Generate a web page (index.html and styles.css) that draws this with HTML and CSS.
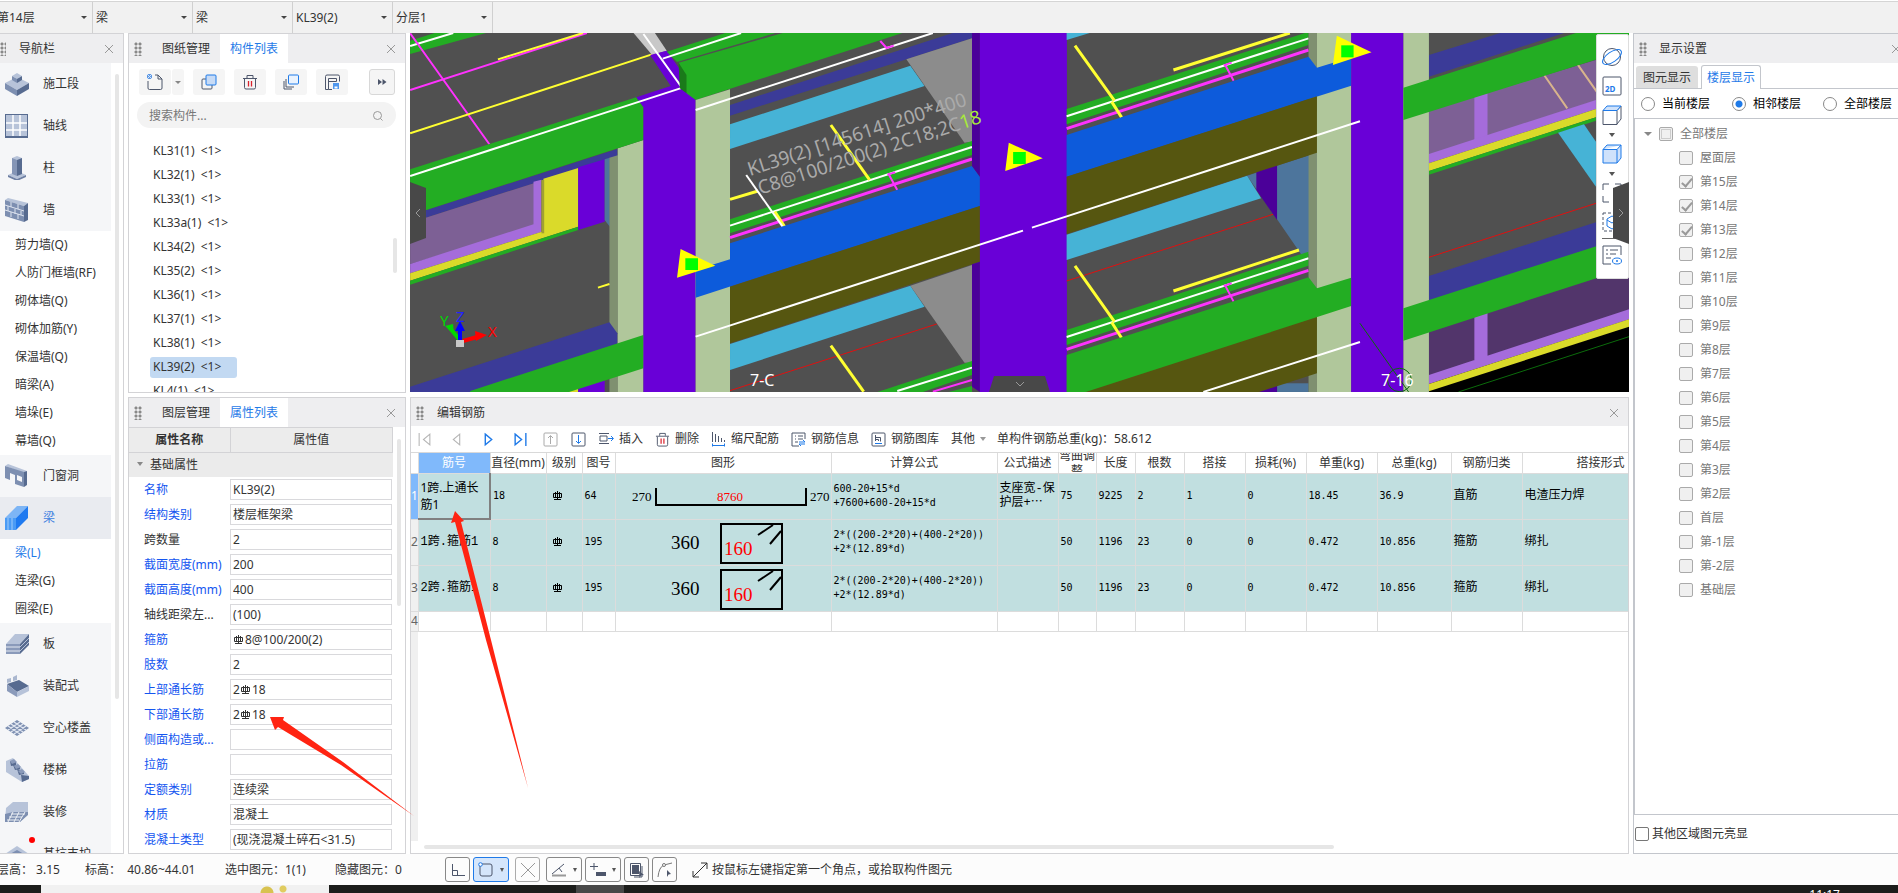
FILE: index.html
```html
<!DOCTYPE html>
<html lang="zh-CN">
<head>
    <meta charset="UTF-8">
    <meta name="viewport" content="width=device-width, initial-scale=1.0">
    <title>编辑钢筋</title>
    <link rel="stylesheet" href="styles.css">
</head>
<body>

<!-- shared icons -->
<svg class="defs" width="0" height="0" aria-hidden="true">
    <symbol id="close" viewBox="0 0 10 10"><path d="M1 1l8 8M9 1l-8 8" fill="none" stroke="#999"/></symbol>
    <symbol id="rebar" viewBox="0 0 12 12"><path d="M1.500 3.500h8v4h-8zM5.500 1v9M3.500 2v6M7.500 2v6M2 9.500h7" fill="none" stroke="currentColor"/></symbol>
    <symbol id="trash" viewBox="0 0 16 16"><path d="M1 4.500h14M5 4V1.500h6V4M2.500 5v8.500q0 1.500 1.500 1.500h8q1.500 0 1.500-1.500V5" fill="none" stroke="#4d566b"/><path d="M6.500 7v5.500M9.500 7v5.500" stroke="#d9232e" stroke-width="1.300"/></symbol>
    <symbol id="cube" viewBox="0 0 20 20"><path d="M1 5.500h14v14H1zM15 5.500L19 1v13l-4 5" stroke="#4d566b" fill="none"/><path d="M1 5.500L5 1h14l-4 4.500z" fill="#cfe2fb" stroke="#1f7ae8"/></symbol>
</svg>

<header class="floor-bar">
    <label class="drop"><select aria-label="楼层"><option>第14层</option></select></label>
    <label class="drop"><select aria-label="构件大类"><option>梁</option></select></label>
    <label class="drop"><select aria-label="构件类型"><option>梁</option></select></label>
    <label class="drop"><select aria-label="构件"><option>KL39(2)</option></select></label>
    <label class="drop"><select aria-label="分层"><option>分层1</option></select></label>
</header>

<main class="workspace">

    <nav class="panel nav">
        <div class="panel-head">
            <i class="grip"></i><span class="title">导航栏</span>
            <button class="close" aria-label="关闭"><svg><use href="#close"/></svg></button>
        </div>
        <div class="nav-body">
            <ul class="nav-list">
                <li><button class="group"><svg viewBox="0 0 24 24"><path d="M0 11l12-6 12 6-12 7z" fill="#b7c3d9"/><path d="M0 11l12 7v6L0 17z" fill="#7d8fb1"/><path d="M24 11l-12 7v6l12-7z" fill="#576b90"/><path d="M7 4l5-3 5 3-5 3z" fill="#b7c3d9"/><path d="M7 4l5 3v4L7 8z" fill="#7d8fb1"/><path d="M17 4l-5 3v4l5-3z" fill="#576b90"/></svg>施工段</button></li>
                <li><button class="group"><svg viewBox="0 0 24 24"><path d="M0 0h23v24H0z" fill="#576b90"/><path d="M1 1h21v21H1z" fill="#b7c3d9"/><path d="M8 1v21M15 1v21M1 9h21M1 16h21" stroke="#fff" stroke-width="1.500"/></svg>轴线</button></li>
                <li><button class="group"><svg viewBox="0 0 24 24"><path d="M3 19l9-4 9 4-9 4z" fill="#b7c3d9"/><path d="M3 19l9 4 9-4v2l-9 4-9-4z" fill="#6d7fa3"/><path d="M7 2h5v18l-5-2z" fill="#8495b6"/><path d="M12 2h5v16l-5 2z" fill="#576b90"/><path d="M7 2l5-2 5 2-5 2z" fill="#b7c3d9"/></svg>柱</button></li>
                <li><button class="group"><svg viewBox="0 0 24 24"><path d="M0 2l3-2 20 5-4 3z" fill="#b7c3d9"/><path d="M0 2l19 6v16L0 18z" fill="#7d8fb1"/><path d="M19 8l4-3v17l-4 2z" fill="#576b90"/><path d="M0 7l19 6M0 12l19 6M6 4v5M13 6v5M3 8v5M10 11v5M16 13v4M6 14v5M13 16v5" stroke="#dfe5f0"/></svg>墙</button></li>
                <li><button class="sub">剪力墙(Q)</button></li>
                <li><button class="sub">人防门框墙(RF)</button></li>
                <li><button class="sub">砌体墙(Q)</button></li>
                <li><button class="sub">砌体加筋(Y)</button></li>
                <li><button class="sub">保温墙(Q)</button></li>
                <li><button class="sub">暗梁(A)</button></li>
                <li><button class="sub">墙垛(E)</button></li>
                <li><button class="sub">幕墙(Q)</button></li>
                <li><button class="group"><svg viewBox="0 0 24 24"><path d="M0 2l3-2 19 7-3 2z" fill="#b7c3d9"/><path d="M0 2l19 6v15l-9-3V11l-5-2v7l-5-2z" fill="#7d8fb1"/><path d="M19 8l3-1v14l-3 2z" fill="#576b90"/><path d="M12 11l5 2v5l-5-2z" fill="#f5f6f8"/></svg>门窗洞</button></li>
                <li><button class="group active"><svg viewBox="0 0 24 24"><path d="M0 12L12 0h11L11 12z" fill="#7db5f5"/><path d="M0 12h11v12H0z" fill="#4a9bf5"/><path d="M3 12v12M7 12v12" stroke="#9fcbf9"/><path d="M11 12L23 0v12L11 24z" fill="#1f7af0"/></svg>梁</button></li>
                <li><button class="sub active">梁(L)</button></li>
                <li><button class="sub">连梁(G)</button></li>
                <li><button class="sub">圈梁(E)</button></li>
                <li><button class="group"><svg viewBox="0 0 24 24"><path d="M1 12L10 2h14l-9 10z" fill="#b7c3d9"/><path d="M1 12h14v10H1z" fill="#8a9aba"/><path d="M1 15h14M1 19h14" stroke="#e4e9f2"/><path d="M15 12l9-10v11l-9 9z" fill="#576b90"/><path d="M15 15l9-9M15 19l9-9" stroke="#b7c3d9"/></svg>板</button></li>
                <li><button class="group"><svg viewBox="0 0 24 24"><path d="M2 10l12-4 10 6-12 6z" fill="#576b90"/><path d="M2 10l10 8v5L2 17z" fill="#8a9aba"/><path d="M24 12v5l-12 6v-5z" fill="#b7c3d9"/><path d="M2 5l4-1v4l-4 1zM8 3l4-2v5l-4 1z" fill="#aab7cf"/></svg>装配式</button></li>
                <li><button class="group"><svg viewBox="0 0 24 24"><path d="M0 12l12-8 12 8-12 8z" fill="#7d8fb1"/><path d="M3 14l12-8M6 16l12-8M9 18l12-8M21 14L9 6M18 16L6 8M15 18L3 10" stroke="#e1e7f1" stroke-width="1.500"/></svg>空心楼盖</button></li>
                <li><button class="group"><svg viewBox="0 0 24 24"><path d="M1 3l7-3 16 18v3l-7 3L1 14z" fill="#b7c3d9"/><path d="M5 3l6 1v3l-5 1zM8 7l7 1v3l-5 1zM12 11l7 2v3l-5 1zM16 17l8 1v3l-7 3z" fill="#576b90"/><path d="M5 3l4-2 3 3-5 2zM9 8l4-2 3 3-5 2zM13 13l4-2 3 3-4 2z" fill="#8a9aba"/></svg>楼梯</button></li>
                <li><button class="group"><svg viewBox="0 0 24 24"><path d="M1 8l7-6h15v12l-8 8H0z" fill="#b7c3d9"/><path d="M0 14l8-2h15v3l-8 7H0z" fill="#7d8fb1"/><path d="M6 14h14M4 17h13M2 20h12M8 12l-5 10M14 12L9 22M20 12l-6 10" stroke="#eef1f6"/></svg>装修</button></li>
                <li><button class="group dot"><svg viewBox="0 0 24 24"><path d="M0 12L12 4l12 8-12 8z" fill="#b7c3d9"/><path d="M5 12l7-4 7 4-7 4z" fill="#7d8fb1"/></svg>基坑支护</button></li>
            </ul>
            <i class="vbar nav-bar"></i>
        </div>
    </nav>

    <div class="side">
        <section class="panel parts">
            <div class="panel-head">
                <i class="grip"></i>
                <button class="tab">图纸管理</button><button class="tab active">构件列表</button>
                <button class="close" aria-label="关闭"><svg><use href="#close"/></svg></button>
            </div>
            <div class="parts-tools">
                <div class="split">
                    <button class="tool" aria-label="新建"><svg viewBox="0 0 16 16"><path d="M1 7v7q0 1.500 1.500 1.500h11q1.500 0 1.500-1.500V5l-4-4H8M11 1v4h4" fill="none" stroke="#4d566b"/><path d="M0 0h5v5H0z" fill="#5d98e4"/><path d="M0 0l5 5M5 0L0 5" stroke="#d8e7fa"/></svg></button>
                    <button class="tool arrow" aria-label="新建选项"></button>
                </div>
                <button class="tool" aria-label="复制"><svg viewBox="0 0 16 16"><rect x="1" y="5" width="10" height="10" rx="1" fill="none" stroke="#4d566b"/><rect x="5" y="1" width="10" height="10" rx="1" fill="#c7dbf6" stroke="#1f7ae8"/></svg></button>
                <button class="tool" aria-label="删除"><svg><use href="#trash"/></svg></button>
                <button class="tool" aria-label="层间复制"><svg viewBox="0 0 16 16"><path d="M1 7v8h8M3 5v8h8" fill="none" stroke="#4d566b"/><rect x="5.500" y="1" width="10" height="9" rx="1" fill="#eaf3fe" stroke="#1f7ae8"/></svg></button>
                <button class="tool" aria-label="存档"><svg viewBox="0 0 16 16"><path d="M8 15.500H4.500V4.500M1.500 15.500h3M1.500 15.500v-13q0-1.500 1.500-1.500h11q1.500 0 1.500 1.500v5M4.500 4.500h8M12.500 4.500v3M4.500 7.500h8" fill="none" stroke="#4d566b"/><path d="M9 9h6v6H9z" fill="#4f97ee"/><path d="M10.500 12.500h3v2h-3z" fill="#fff"/></svg></button>
                <button class="tool more" aria-label="更多"><svg viewBox="0 0 16 16"><path d="M4 5l4 3-4 3zM8.500 5l4 3-4 3z" fill="#4d566b"/></svg></button>
            </div>
            <label class="search">
                <input type="text" placeholder="搜索构件..." aria-label="搜索构件">
                <svg viewBox="0 0 12 12"><circle cx="5.500" cy="5.500" r="4" fill="none" stroke="#999"/><path d="M8.500 8.500l2 2" stroke="#999"/></svg>
            </label>
            <div class="parts-body">
                <ul class="parts-list">
                    <li><span>KL31(1) &nbsp;&lt;1&gt;</span></li>
                    <li><span>KL32(1) &nbsp;&lt;1&gt;</span></li>
                    <li><span>KL33(1) &nbsp;&lt;1&gt;</span></li>
                    <li><span>KL33a(1) &nbsp;&lt;1&gt;</span></li>
                    <li><span>KL34(2) &nbsp;&lt;1&gt;</span></li>
                    <li><span>KL35(2) &nbsp;&lt;1&gt;</span></li>
                    <li><span>KL36(1) &nbsp;&lt;1&gt;</span></li>
                    <li><span>KL37(1) &nbsp;&lt;1&gt;</span></li>
                    <li><span>KL38(1) &nbsp;&lt;1&gt;</span></li>
                    <li><span class="selected">KL39(2) &nbsp;&lt;1&gt;</span></li>
                    <li><span>KL4(1) &nbsp;&lt;1&gt;</span></li>
                </ul>
                <i class="vbar parts-bar"></i>
            </div>
        </section>

        <section class="panel props">
            <div class="panel-head">
                <i class="grip"></i>
                <button class="tab">图层管理</button><button class="tab active">属性列表</button>
                <button class="close" aria-label="关闭"><svg><use href="#close"/></svg></button>
            </div>
            <div class="props-body">
                <table class="props-table">
                    <thead>
                        <tr><th class="name">属性名称</th><th>属性值</th></tr>
                        <tr class="section"><td colspan="2"><i class="tri"></i>基础属性</td></tr>
                    </thead>
                    <tbody>
                        <tr><td><label for="p1">名称</label></td><td><div class="field"><input id="p1" value="KL39(2)"></div></td></tr>
                        <tr><td><label for="p2">结构类别</label></td><td><div class="field"><input id="p2" value="楼层框架梁"></div></td></tr>
                        <tr><td><label for="p3" class="fixed">跨数量</label></td><td><div class="field"><input id="p3" value="2"></div></td></tr>
                        <tr><td><label for="p4">截面宽度(mm)</label></td><td><div class="field"><input id="p4" value="200"></div></td></tr>
                        <tr><td><label for="p5">截面高度(mm)</label></td><td><div class="field"><input id="p5" value="400"></div></td></tr>
                        <tr><td><label for="p6" class="fixed">轴线距梁左...</label></td><td><div class="field"><input id="p6" value="(100)"></div></td></tr>
                        <tr><td><label for="p7">箍筋</label></td><td><div class="field"><svg class="rebar"><use href="#rebar"/></svg><input id="p7" value="8@100/200(2)"></div></td></tr>
                        <tr><td><label for="p8">肢数</label></td><td><div class="field"><input id="p8" value="2"></div></td></tr>
                        <tr><td><label for="p9">上部通长筋</label></td><td><div class="field">2<svg class="rebar"><use href="#rebar"/></svg><input id="p9" value="18"></div></td></tr>
                        <tr><td><label for="p10">下部通长筋</label></td><td><div class="field">2<svg class="rebar"><use href="#rebar"/></svg><input id="p10" value="18"></div></td></tr>
                        <tr><td><label for="p11">侧面构造或...</label></td><td><div class="field"><input id="p11" value=""></div></td></tr>
                        <tr><td><label for="p12">拉筋</label></td><td><div class="field"><input id="p12" value=""></div></td></tr>
                        <tr><td><label for="p13">定额类别</label></td><td><div class="field"><input id="p13" value="连续梁"></div></td></tr>
                        <tr><td><label for="p14">材质</label></td><td><div class="field"><input id="p14" value="混凝土"></div></td></tr>
                        <tr><td><label for="p15">混凝土类型</label></td><td><div class="field"><input id="p15" value="(现浇混凝土碎石&lt;31.5)"></div></td></tr>
                    </tbody>
                </table>
                <i class="vbar props-bar"></i>
            </div>
        </section>
    </div>

    <div class="center">
        <section class="view">
            <svg class="scene" viewBox="0 0 1219 359" preserveAspectRatio="xMinYMin slice">
                <rect width="1219" height="359" fill="#505050"/>

                <!-- left bays -->
                <g class="bay" transform="translate(-5 -3) scale(.3954 .3333)">
                    <path class="green" d="M13 32L75 9H205L13 72z"/>
                    <path class="w" d="M13 48L122 9"/>
                    <path class="m" d="M13 10L222 357M13 180L460 9"/>
                    <path class="y" d="M235 88L450 9M13 310L640 67"/>
                    <path d="M578 9h54l30 53-37 13z" fill="#c8c8c8"/>
                    <path class="navy" d="M13 556L537 357V380L13 578z"/>
                    <path class="mauve" d="M13 578L330 458V590L13 702z"/>
                    <path class="lav" d="M13 702L325 583V455L345 449V606L13 730z"/>
                    <path class="yel" d="M13 730L350 604V446L438 414V590L13 752z"/>
                    <path d="M345 450h7V610h-7z" fill="#a0a030"/>
                    <path class="green" d="M13 752L438 590V600L13 764z"/>
                    <path class="purple" d="M438 412L505 388V575L438 600z"/>
                    <path class="steel" d="M505 388L518 383V590L505 570z"/>
                    <path class="stone-dark" d="M517 383L538 376V1086H517z"/>
                    <path class="stone" d="M538 355L603 330V1086H538z"/>
                    <path class="navy" d="M13 1070L517 877 537 910V945L170 1086H13z"/>
                    <path class="y" d="M488 773L517 762"/>
                    <path class="yel" d="M400 1086L438 1070V1086z"/>
                    <path class="purple" d="M438 1070L505 1050V1086H438z"/>
                    <path class="green" d="M165 1083L603 915V1015L415 1086H165z"/>
                    <path class="green" d="M13 418L585 202 603 232V330L13 556z"/>
                    <path class="purple" d="M585 202L672 168 620 75 662 62 735 185V1086H603V232z"/>
                    <path class="w" d="M13 438L702 173M603 12L700 172"/>

                    <path class="green" d="M662 65L810 9H937L688 96zM692 98L955 9H1258L735 210 712 190z"/>
                    <path d="M692 98l20 37v55l-17-15z" fill="#1a7a1a"/>
                    <path class="w" d="M652 86L850 9"/>
                    <path class="stone" d="M735 210L822 178V1086H735z"/>
                    <path class="navy" d="M822 225L1385 9H1454V17L822 257z"/>
                    <path class="w thick" d="M735 240L1335 9"/>
                    <path class="m" d="M1202 33L1218 54 1236 47"/>
                    <path class="sky" d="M822 283L1278 107 1314 168 822 357z"/>
                    <path class="slab" d="M1268 88L1434 25V335L1415 338z"/>
                    <path class="green" d="M822 568L1434 333V375L822 610z"/>
                    <path class="w" d="M822 587L1434 351"/>
                    <path class="m thick" d="M822 623L1434 387"/>
                    <path class="y thick" d="M1077 285L1175 450M935 545L960 590M822 508L893 483"/>
                    <path class="m" d="M1222 430L1245 480M1220 434L1240 427"/>
                    <path class="w thick" d="M863 435L955 590"/>
                    <path class="blue" d="M735 720L822 688V640L1434 408 1454 440V528L735 803z"/>
                    <path class="olive" d="M822 770L1454 528V695L822 940z"/>
                    <path class="sky" d="M822 942L1278 767 1314 830 822 1020z"/>
                    <path class="slab" d="M1278 767L1434 705V998H1415z"/>
                    <path class="r" d="M822 1082L1345 882"/>
                    <path class="y thick" d="M1077 947L1160 1085"/>
                    <path class="green" d="M1195 1086L1434 993V1035L1310 1086zM1375 1086L1434 1068V1086z"/>
                    <path class="w" d="M1245 1083L1434 1013"/>
                    <path class="m" d="M1335 1085L1434 1050"/>
                    <path class="violet" d="M1434 9H1454V440L1434 408zM1434 703L1454 695V1086L1434 1070z"/>
                    <path class="purple" d="M1454 9H1674V1086H1454z"/>
                    <path class="w" d="M735 920L1563 602"/>
                    <path class="mark" d="M697 657L785 707 688 743zM1527 338L1613 385 1518 423z"/>
                    <path class="knob" d="M709 685h32v35h-32zM1538 366h32v36h-32z"/>
                </g>

                <!-- right bays -->
                <g class="bay" transform="translate(600 -3) scale(.3986 .3333)">
                    <path class="sky" d="M142 9H200L142 30z"/>
                    <path class="green" d="M142 237L740 9H749V45L142 283z"/>
                    <path class="w" d="M142 259L749 25"/>
                    <path class="m thick" d="M142 296L749 60"/>
                    <path class="m" d="M540 105L561 152M536 106L556 98"/>
                    <path class="y thick" d="M163 47L262 212M255 215L280 262M410 120L702 9"/>
                    <path class="steel" d="M595 437L770 368V672H730z"/>
                    <path class="violet" d="M618 425L670 405V570L618 480z"/>
                    <path class="sky" d="M142 614L595 437 630 505 142 690z"/>
                    <path class="r" d="M142 753L660 553"/>
                    <path class="green" d="M142 900L749 665V707L142 945z"/>
                    <path class="w" d="M142 921L749 685"/>
                    <path class="m thick" d="M142 958L749 721"/>
                    <path class="m" d="M540 767L561 815M536 768L556 760"/>
                    <path class="y thick" d="M163 708L262 875M255 877L280 924M410 783L725 660"/>
                    <path class="steel" d="M670 1060H749V1086H670z"/>
                    <path class="violet" d="M620 1086L670 1060V1086z"/>
                    <path class="stone-dark" d="M749 9H770V1086H749z"/>
                    <path class="stone" d="M770 9H856V1086H770z"/>
                    <path class="blue" d="M142 315L749 80 770 113 856 82V167L142 440z"/>
                    <path class="olive" d="M142 440L770 199V368L142 612z"/>
                    <path class="olive" d="M185 1086L770 855V1030L625 1086z"/>
                    <path class="green" d="M142 975L749 742 770 775 856 743V828L190 1086H142z"/>
                    <path class="purple" d="M856 9H987V1086H856z"/>
                    <path class="w" d="M55 593L878 274M485 1086L878 936"/>

                    <path d="M1051 1060L1553 870V1086H1051z"/>
                    <path class="navy" d="M1051 75L1230 9H1390L1051 140z"/>
                    <path class="mauve" d="M1051 240L1553 60V180L1051 375z"/>
                    <path class="lav" d="M1165 200L1198 190V330L1165 342z"/>
                    <path d="M1340 135L1398 235M1424 103L1475 190" stroke="#d8b48c" stroke-width="2"/>
                    <path class="lav" d="M1051 372L1470 210V237L1051 400z"/>
                    <path class="yel" d="M1051 400L1470 237V262L1051 423z"/>
                    <path class="green" d="M1051 423L1470 262V272L1051 434z"/>
                    <path class="sky" d="M1375 308L1440 283 1470 335V470z"/>
                    <path class="r" d="M1051 682L1470 520"/>
                    <path class="navy" d="M1051 738L1470 577V660L1051 820z"/>
                    <path d="M1051 900L1553 710V845L1051 1040z" fill="#52356b"/>
                    <path class="lav" d="M1165 855L1198 845V990L1165 1000zM1051 1035L1553 838V868L1051 1062z"/>
                    <path class="yel" d="M1051 1062L1553 868V890L1051 1084z"/>
                    <path class="stone" d="M987 9H1051V1086H987z"/>
                    <path class="green" d="M987 173L1420 9H1553V58L987 270zM987 835L1553 617V713L987 932z"/>
                    <path d="M1125 1086L1553 920M878 880L1000 1086" fill="none" stroke="#0b6b0b"/>
                    <ellipse cx="977" cy="1050" rx="30" ry="35" fill="none" stroke="#0b6b0b"/>
                    <path class="mark" d="M820 17L907 67 810 105z"/>
                    <path class="knob" d="M831 46h31v36h-31z"/>
                </g>

                <g class="note" transform="translate(340 143) rotate(-18)">
                    <text>KL39(2) [145614] 200*400</text>
                    <text x="4" y="21">C8@100/200(2) 2C18;2C<tspan fill="#a8e83c">18</tspan></text>
                </g>
                <text class="axis-no" x="971" y="353">7-16</text>
                <text class="axis-no" x="340" y="353">7-C</text>

                <!-- axis gizmo -->
                <path d="M49 306l-10-12" stroke="#00d800" stroke-width="4"/>
                <path d="M35 293l8-2 1 10z" fill="#00d800"/>
                <path d="M50 307V296" stroke="#0000ff" stroke-width="4"/>
                <path d="M45 298l5-10 5 10z" fill="#0000ff"/>
                <path d="M53 308l14-4" stroke="#f00" stroke-width="4"/>
                <path d="M65 298l12 4-11 6z" fill="#f00"/>
                <path d="M46 307h8v7h-8z" fill="#c8c8c8"/>
                <text class="axis" x="30" y="293" fill="#00d800">Y</text>
                <text class="axis" x="46" y="289" fill="#2020ff">Z</text>
                <text class="axis" x="78" y="304" fill="#f00">X</text>
            </svg>
            <button class="fold fold-left" aria-label="折叠左侧"><svg viewBox="0 0 8 10"><path d="M6 1L2 5l4 4" fill="none" stroke="#999"/></svg></button>
            <button class="fold fold-down" aria-label="折叠下方"><svg viewBox="0 0 10 8"><path d="M1 2l4 4 4-4" fill="none" stroke="#999"/></svg></button>
            <div class="view-tools">
                <button aria-label="动态观察"><svg viewBox="0 0 20 20"><circle cx="10" cy="10" r="8.500" fill="none" stroke="#4d566b"/><ellipse cx="10" cy="10" rx="11" ry="5" transform="rotate(-35 10 10)" fill="none" stroke="#1f7ae8"/></svg></button>
                <button aria-label="二维"><svg viewBox="0 0 20 20"><rect x="1" y="1" width="18" height="18" rx="1" fill="none" stroke="#4d566b"/><text x="3" y="16" class="two-d">2D</text></svg></button>
                <button aria-label="俯视"><svg><use href="#cube"/></svg></button>
                <i class="tri"></i>
                <button aria-label="三维"><svg viewBox="0 0 20 20"><path d="M1 5.500L5 1h14v13l-4 5H1zM1 5.500h14L19 1M15 5.500V19" fill="#cfe2fb" stroke="#1f7ae8"/></svg></button>
                <i class="tri"></i>
                <button aria-label="全屏"><svg viewBox="0 0 20 20"><path d="M1 7V1h6M13 1h6v6M1 13v6h6M13 19h6v-6" fill="none" stroke="#4d566b"/></svg></button>
                <button aria-label="局部三维"><svg viewBox="0 0 20 20"><path d="M1 1h18v18H1z" fill="none" stroke="#4d566b" stroke-dasharray="3 2"/><path d="M10 4l6 3v7l-6 3-5-3V7zM5 8l5 3 6-4" fill="none" stroke="#1f7ae8"/></svg></button>
                <hr>
                <button aria-label="显示设置"><svg viewBox="0 0 20 20"><path d="M9 19H1V1h18v9M4 5h2M8 5h8M4 9h2M8 9h6M4 13h5" fill="none" stroke="#4d566b"/><ellipse cx="15" cy="16" rx="4.500" ry="3" fill="none" stroke="#1f7ae8"/><circle cx="15" cy="16" r="1" fill="#1f7ae8"/></svg></button>
            </div>
            <button class="fold fold-right" aria-label="折叠右侧"><svg viewBox="0 0 8 10"><path d="M2 1l4 4-4 4" fill="none" stroke="#999"/></svg></button>
        </section>

        <section class="panel edit">
            <div class="panel-head">
                <i class="grip"></i><span class="title">编辑钢筋</span>
                <button class="close" aria-label="关闭"><svg><use href="#close"/></svg></button>
            </div>
            <div class="edit-tools">
                <button class="step" aria-label="首行"><svg viewBox="0 0 14 14"><path d="M2 1v12M12 2L6 7l6 5z" fill="none" stroke="#b5b5b5"/></svg></button>
                <button class="step" aria-label="上一行"><svg viewBox="0 0 14 14"><path d="M10 2L4 7l6 5z" fill="none" stroke="#b5b5b5"/></svg></button>
                <button class="step" aria-label="下一行"><svg viewBox="0 0 14 14"><path d="M4 2l6 5-6 5z" fill="none" stroke="#1f7ae8" stroke-width="1.300"/></svg></button>
                <button class="step" aria-label="末行"><svg viewBox="0 0 14 14"><path d="M12 1v12M2 2l6 5-6 5z" fill="none" stroke="#1f7ae8" stroke-width="1.300"/></svg></button>
                <button class="move" aria-label="上移"><svg viewBox="0 0 15 15"><rect x="1" y="1" width="13" height="13" rx="1" fill="none" stroke="#aaa"/><path d="M7.500 12V4M5 6l2.500-2.500L10 6" fill="none" stroke="#aaa"/></svg></button>
                <button class="move" aria-label="下移"><svg viewBox="0 0 15 15"><rect x="1" y="1" width="13" height="13" rx="1" fill="none" stroke="#4d566b"/><path d="M7.500 3v8M5 9l2.500 2.500L10 9" fill="none" stroke="#1f7ae8"/></svg></button>
                <button class="cmd"><svg viewBox="0 0 15 15"><path d="M0 1.500h10M0 11.500h10M1 4h7v5H1z" fill="none" stroke="#4d566b"/><path d="M9 6.500h5M12 4l2.500 2.500L12 9" fill="none" stroke="#1f7ae8"/></svg>插入</button>
                <button class="cmd"><svg><use href="#trash"/></svg>删除</button>
                <button class="cmd"><svg viewBox="0 0 15 15"><path d="M1.500 0v10M4.500 2v8M7.500 4v6M10.500 6v4M13.500 8v2" stroke="#4d566b"/><path d="M1 13.500h13M1.500 11.500v3M13.500 11.500v3" stroke="#1f7ae8"/></svg>缩尺配筋</button>
                <button class="cmd"><svg viewBox="0 0 15 15"><path d="M8 14H1V1h13v6M4 4h1M7 4h5M4 7h1M7 7h5M4 10h3" fill="none" stroke="#4d566b"/><path d="M8 10h6l-2-2M14 12H8l2 2" fill="none" stroke="#1f7ae8"/></svg>钢筋信息</button>
                <button class="cmd"><svg viewBox="0 0 15 15"><rect x="1" y="1" width="13" height="13" rx="1" fill="none" stroke="#4d566b"/><path d="M4.500 3v6M4.500 5.500h5v4M7.500 9V7.500h-3" fill="none" stroke="#4d566b"/><path d="M4 11.500h7" stroke="#1f7ae8"/></svg>钢筋图库</button>
                <button class="cmd other">其他<i class="tri"></i></button>
                <span class="total">单构件钢筋总重(kg)：58.612</span>
            </div>
            <div class="sheet-wrap">
                <table class="sheet">
                    <colgroup>
                        <col class="c0"><col class="c1"><col class="c2"><col class="c3"><col class="c4"><col class="c5"><col class="c6"><col class="c7"><col class="c8"><col class="c9"><col class="c10"><col class="c11"><col class="c11"><col class="c13"><col class="c14"><col class="c13"><col class="c16">
                    </colgroup>
                    <thead>
                        <tr><th></th><th class="on">筋号</th><th>直径(mm)</th><th>级别</th><th>图号</th><th>图形</th><th>计算公式</th><th>公式描述</th><th><div class="two">弯曲调整</div></th><th>长度</th><th>根数</th><th>搭接</th><th>损耗(%)</th><th>单重(kg)</th><th>总重(kg)</th><th>钢筋归类</th><th>搭接形式</th></tr>
                    </thead>
                    <tbody>
                        <tr class="row">
                            <th class="on">1</th><td class="current">1跨.上通长筋1</td><td>18</td><td class="grade"><svg class="rebar"><use href="#rebar"/></svg></td><td>64</td>
                            <td class="shape"><svg viewBox="0 0 216 45"><path d="M40 14V31H190V14" fill="none" stroke="#000" stroke-width="2"/><text x="16" y="27">270</text><text x="101" y="27" fill="#f00">8760</text><text x="194" y="27">270</text></svg></td>
                            <td>600-20+15*d<br>+7600+600-20+15*d</td><td class="cn">支座宽-保护层+⋯</td><td>75</td><td>9225</td><td>2</td><td>1</td><td>0</td><td>18.45</td><td>36.9</td><td class="cn">直筋</td><td class="cn">电渣压力焊</td>
                        </tr>
                        <tr class="row">
                            <th>2</th><td class="cn">1跨.箍筋1</td><td>8</td><td class="grade"><svg class="rebar"><use href="#rebar"/></svg></td><td>195</td>
                            <td class="shape"><svg viewBox="0 0 216 45"><rect x="105" y="4" width="61" height="39" fill="none" stroke="#000" stroke-width="2"/><path d="M142 15l15-10M154 24l11-13" stroke="#000" stroke-width="2"/><text class="big" x="55" y="29">360</text><text class="big" x="108" y="35" fill="#f00">160</text></svg></td>
                            <td>2*((200-2*20)+(400-2*20))<br>+2*(12.89*d)</td><td></td><td>50</td><td>1196</td><td>23</td><td>0</td><td>0</td><td>0.472</td><td>10.856</td><td class="cn">箍筋</td><td class="cn">绑扎</td>
                        </tr>
                        <tr class="row">
                            <th>3</th><td class="cn">2跨.箍筋1</td><td>8</td><td class="grade"><svg class="rebar"><use href="#rebar"/></svg></td><td>195</td>
                            <td class="shape"><svg viewBox="0 0 216 45"><rect x="105" y="4" width="61" height="39" fill="none" stroke="#000" stroke-width="2"/><path d="M142 15l15-10M154 24l11-13" stroke="#000" stroke-width="2"/><text class="big" x="55" y="29">360</text><text class="big" x="108" y="35" fill="#f00">160</text></svg></td>
                            <td>2*((200-2*20)+(400-2*20))<br>+2*(12.89*d)</td><td></td><td>50</td><td>1196</td><td>23</td><td>0</td><td>0</td><td>0.472</td><td>10.856</td><td class="cn">箍筋</td><td class="cn">绑扎</td>
                        </tr>
                        <tr class="empty"><th>4</th><td></td><td></td><td></td><td></td><td></td><td></td><td></td><td></td><td></td><td></td><td></td><td></td><td></td><td></td><td></td><td></td></tr>
                    </tbody>
                </table>
            </div>
            <i class="hbar"></i>
        </section>
    </div>

    <aside class="panel display">
        <div class="panel-head">
            <i class="grip"></i><span class="title">显示设置</span>
            <button class="close" aria-label="关闭"><svg><use href="#close"/></svg></button>
        </div>
        <div class="sheet-tabs"><button>图元显示</button><button class="active">楼层显示</button></div>
        <div class="scope">
            <label><input type="radio" name="scope">当前楼层</label>
            <label><input type="radio" name="scope" checked>相邻楼层</label>
            <label><input type="radio" name="scope">全部楼层</label>
        </div>
        <div class="floors">
            <label class="root"><i class="tri"></i><input type="checkbox" class="partial" disabled>全部楼层</label>
            <label><input type="checkbox" disabled>屋面层</label>
            <label><input type="checkbox" disabled checked>第15层</label>
            <label><input type="checkbox" disabled checked>第14层</label>
            <label><input type="checkbox" disabled checked>第13层</label>
            <label><input type="checkbox" disabled>第12层</label>
            <label><input type="checkbox" disabled>第11层</label>
            <label><input type="checkbox" disabled>第10层</label>
            <label><input type="checkbox" disabled>第9层</label>
            <label><input type="checkbox" disabled>第8层</label>
            <label><input type="checkbox" disabled>第7层</label>
            <label><input type="checkbox" disabled>第6层</label>
            <label><input type="checkbox" disabled>第5层</label>
            <label><input type="checkbox" disabled>第4层</label>
            <label><input type="checkbox" disabled>第3层</label>
            <label><input type="checkbox" disabled>第2层</label>
            <label><input type="checkbox" disabled>首层</label>
            <label><input type="checkbox" disabled>第-1层</label>
            <label><input type="checkbox" disabled>第-2层</label>
            <label><input type="checkbox" disabled>基础层</label>
        </div>
        <label class="glow"><input type="checkbox">其他区域图元亮显</label>
    </aside>
</main>

<footer class="status">
    <div class="facts">
        <span class="f1">层高： 3.15</span><span class="f2">标高： &nbsp;40.86~44.01</span><span class="f3">选中图元：1(1)</span><span>隐藏图元：0</span>
    </div>
    <div class="snaps">
        <button aria-label="正交"><svg viewBox="0 0 16 16"><path d="M2.500 2v11.500H15M2.500 8.500h5v5" fill="none" stroke="#4d566b"/></svg></button>
        <button class="wide active" aria-label="矩形"><svg viewBox="0 0 16 16"><rect x="2" y="2" width="12" height="12" rx="2" fill="none" stroke="#4d566b"/><circle cx="2.500" cy="2.500" r="1.800" fill="#fff" stroke="#1f7ae8"/></svg><i class="tri"></i></button>
        <button class="off" aria-label="交点"><svg viewBox="0 0 16 16"><path d="M1 1l14 14M15 1L1 15" fill="none" stroke="#999"/></svg></button>
        <button class="wide" aria-label="角度"><svg viewBox="0 0 16 16"><path d="M1 12L13 2M8 6l3 4" fill="none" stroke="#4d566b"/><path d="M1 13.500h14" stroke="#999" stroke-width="2"/></svg><i class="tri"></i></button>
        <button class="wide" aria-label="偏移"><svg viewBox="0 0 16 16"><path d="M4 1v7M0 4.500h8" stroke="#4d566b"/><path d="M6 10h10v4H6z" fill="#4d566b"/></svg><i class="tri"></i></button>
        <button aria-label="选择"><svg viewBox="0 0 16 16"><path d="M3 3h7v9H3z" fill="#4d566b"/><path d="M1.500 1.500h10v12h-10zM13 4v11H5" fill="none" stroke="#4d566b"/><path d="M10 9l5 4-3 .5-1.500 2.500z" fill="#4d566b"/></svg></button>
        <button aria-label="折线"><svg viewBox="0 0 16 16"><path d="M1 15q1-10 6-12l8-2" fill="none" stroke="#777"/><circle cx="7" cy="3" r="1.500" fill="#fff" stroke="#777"/><path d="M10 8l4 4-2.500.5L10 15z" fill="#4d566b"/></svg></button>
    </div>
    <div class="hint"><svg viewBox="0 0 16 16"><path d="M1 15L15 1M9 1h6v6M1 9v6h6" fill="none" stroke="#333"/></svg>按鼠标左键指定第一个角点，或拾取构件图元</div>
</footer>

<div class="taskbar"><i class="window"></i><i class="item"></i><span class="clock">11:17</span></div>

<!-- annotation arrows -->
<svg class="marks" width="600" height="893" viewBox="0 0 600 893">
    <path d="M455 511l9 10-3 1 30 118 37 148-42-148-31-118-4 1z" fill="#ff2412"/>
    <path d="M270 717l14 0-1 3 60 42 71 54-73-51-63-38-3 3z" fill="#ff2412"/>
</svg>

</body>
</html>
```

FILE: styles.css
```css
* {
    margin: 0;
    padding: 0;
    box-sizing: border-box;
}
body {
    display: flex;
    flex-direction: column;
    height: 100vh;
    overflow: hidden;
    position: relative;
    background: #fff;
    color: #333;
    font: 12px/16px "Noto Sans", "Noto Sans CJK SC", sans-serif;
}
button, input, select {
    font: inherit;
    color: inherit;
    border: 0;
    background: none;
    outline: 0;
}
ul {
    list-style: none;
}
svg {
    display: block;
    flex: none;
}
.defs, .marks {
    position: absolute;
}
.marks {
    left: 0;
    top: 0;
    pointer-events: none;
}
.tri {
    border: 3px solid transparent;
    border-top: 4px solid #555;
    border-bottom: 0;
}

/* top selectors */
.floor-bar {
    display: flex;
    flex: none;
    height: 32px;
    margin-top: 1px;
    border-top: 1px solid #d5d5d5;
    background: #f1f1f1;
}
.drop {
    position: relative;
    width: 100px;
    padding-left: 3px;
    border-right: 1px solid #d0d0d0;
}
.drop:first-child {
    width: 93px;
    padding: 0;
}
.drop:first-child select {
    text-indent: -3px;
}
.drop select {
    width: 100%;
    height: 31px;
    appearance: none;
}
.drop::after {
    content: "";
    position: absolute;
    right: 5px;
    top: 14px;
    border: 3px solid transparent;
    border-top: 3px solid #444;
    border-bottom: 0;
}

/* panels */
.workspace {
    display: flex;
    flex: 1;
    min-height: 0;
}
.panel {
    display: flex;
    flex-direction: column;
    border: 1px solid #d3d3d6;
    background: #fff;
    overflow: hidden;
}
.panel-head {
    display: flex;
    align-items: center;
    flex: none;
    height: 29px;
    padding: 1px 9px 0 5px;
    background: #eeeef0;
}
.grip {
    width: 8px;
    height: 14px;
    margin-right: 19px;
    background: radial-gradient(circle, #888 1px, transparent 2px) 0 0 / 4px 4px;
}
.close {
    margin-left: auto;
}
.close svg {
    width: 10px;
    height: 10px;
}
.vbar, .hbar {
    border-radius: 2px;
    background: #e6e6e6;
}
.vbar {
    width: 4px;
}

/* navigation */
.nav {
    width: 124px;
    border-left: 0;
    margin-right: 4px;
}
.nav .panel-head {
    padding-left: 0;
}
.nav .grip {
    width: 6px;
    margin-right: 13px;
}
.nav-body {
    display: flex;
    flex: 1;
    min-height: 0;
    overflow: hidden;
}
.nav-list {
    width: 111px;
}
.nav-bar {
    height: 625px;
    margin: 11px 0 0 4px;
}
.nav-list button {
    display: flex;
    align-items: center;
    width: 100%;
    white-space: nowrap;
}
.nav-list .group {
    height: 42px;
    padding-left: 5px;
    gap: 14px;
    background: #f5f6f8;
}
.nav-list .group.active {
    background: #e9ebf0;
    color: #3f7fe0;
}
.nav-list .group svg {
    width: 24px;
    height: 24px;
}
.nav-list .sub {
    height: 28px;
    padding-left: 15px;
}
.nav-list .sub.active {
    color: #1f7ae8;
}
.dot {
    position: relative;
}
.dot::after {
    content: "";
    position: absolute;
    left: 29px;
    top: 4px;
    width: 6px;
    height: 6px;
    border-radius: 50%;
    background: #f00;
}

/* component list */
.side {
    display: flex;
    flex-direction: column;
    width: 278px;
    gap: 4px;
    margin-right: 4px;
}
.parts {
    flex: 0 0 360px;
}
.parts .grip, .props .grip {
    margin-right: 10px;
}
.side .panel-head {
    padding-top: 0;
}
.tab {
    height: 100%;
    padding: 1px 10px 0;
}
.tab.active {
    background: #fff;
    color: #1f7ae8;
}
.parts-tools {
    display: flex;
    gap: 9px;
    padding: 6px 10px 7px;
}
.tool {
    display: flex;
    align-items: center;
    justify-content: center;
    width: 32px;
    height: 26px;
    border-radius: 3px;
    background: #f5f5f5;
}
.tool svg {
    width: 16px;
    height: 16px;
}
.split {
    display: flex;
    gap: 1px;
}
.tool.arrow {
    width: 12px;
}
.tool.arrow::after {
    content: "";
    border: 3px solid transparent;
    border-top: 3px solid #888;
    border-bottom: 0;
}
.tool.more {
    width: 26px;
    margin-left: auto;
    border: 1px solid #d8d8d8;
}
.search {
    display: flex;
    align-items: center;
    flex: none;
    height: 26px;
    margin: 0 9px 11px 8px;
    padding: 1px 12px 0;
    border-radius: 13px;
    background: #f3f3f3;
}
.search input {
    flex: 1;
    min-width: 0;
}
.search input::placeholder {
    color: #777;
}
.search svg {
    width: 12px;
    height: 12px;
}
.parts-body {
    display: flex;
    min-height: 0;
}
.parts-list {
    flex: 1;
    padding-left: 21px;
}
.parts-list li {
    display: flex;
    align-items: center;
    height: 24px;
}
.parts-list span {
    width: 87px;
    padding: 2px 0 3px 3px;
    border-radius: 3px;
    white-space: nowrap;
}
.parts-list .selected {
    background: #c2d9f2;
}
.parts-bar {
    height: 35px;
    margin: 99px 8px 0 0;
}

/* properties */
.props {
    flex: 1;
    min-height: 0;
}
.props-body {
    display: flex;
    min-height: 0;
}
.props-table {
    width: 264px;
    border-collapse: collapse;
    table-layout: fixed;
}
.props-table th {
    height: 25px;
    border: 1px solid #d3d3d6;
    border-left: 0;
    background: #ececec;
    font-weight: normal;
}
.props-table .name {
    width: 101px;
    font-weight: bold;
}
.props-table .section td {
    height: 24px;
    padding-left: 8px;
    background: #ebebeb;
}
.section .tri {
    display: inline-block;
    margin: 0 7px 3px 0;
    border-top-color: #888;
}
.props-table tbody td {
    height: 25px;
    padding: 1px 1px 0 0;
    white-space: nowrap;
}
.props-table tbody label {
    padding-left: 15px;
    color: #1456f0;
}
.props-table tbody label.fixed {
    color: #333;
}
.field {
    display: flex;
    align-items: center;
    height: 21px;
    padding-left: 2px;
    border: 1px solid #d9d9dc;
}
.field input {
    flex: 1;
    min-width: 0;
}
.rebar {
    width: 12px;
    height: 12px;
}
.props-bar {
    height: 167px;
    margin: 12px 0 0 4px;
}

/* model view */
.center {
    display: flex;
    flex: 1;
    flex-direction: column;
    min-width: 0;
    gap: 5px;
    margin-right: 4px;
}
.view {
    position: relative;
    flex: 0 0 359px;
    overflow: hidden;
}
.scene {
    width: 100%;
    height: 100%;
}
.bay path, .bay ellipse {
    vector-effect: non-scaling-stroke;
}
.green { fill: #23ad23; }
.purple { fill: #6900d7; }
.violet { fill: #4b0099; }
.navy { fill: #3b3b98; }
.stone { fill: #b0c79b; }
.stone-dark { fill: #7f9070; }
.steel { fill: #4d759c; }
.sky { fill: #46b3d6; }
.slab { fill: #8c8c8c; }
.blue { fill: #0d5bdb; }
.olive { fill: #565610; }
.mauve { fill: #7d6095; }
.lav { fill: #a56cdb; }
.yel { fill: #dada2a; }
.mark { fill: #ff0; }
.knob { fill: #0f0; }
.w, .m, .y, .r {
    fill: none;
    stroke-width: 2px;
}
.w { stroke: #fff; }
.m { stroke: #ff32ff; }
.y { stroke: #ffff32; }
.r { stroke: #e01010; stroke-width: 1px; }
.thick { stroke-width: 3px; }
.w.thick { stroke-width: 2px; }
.note {
    fill: #aaa;
    font-size: 19px;
}
.axis-no {
    fill: #fff;
    font-size: 16px;
}
.axis {
    font-size: 15px;
}
.fold {
    position: absolute;
    display: flex;
    align-items: center;
    justify-content: center;
    background: #484848;
}
.fold svg {
    width: 10px;
    height: 10px;
}
.fold-left, .fold-right {
    top: 149px;
    width: 16px;
    height: 62px;
}
.fold-left {
    left: 0;
    clip-path: polygon(0 0, 100% 6px, 100% 56px, 0 100%);
}
.fold-right {
    right: 0;
    clip-path: polygon(100% 0, 0 6px, 0 56px, 100% 100%);
}
.fold-down {
    left: 579px;
    bottom: 0;
    width: 61px;
    height: 16px;
    clip-path: polygon(5px 0, 56px 0, 100% 100%, 0 100%);
}
.view-tools {
    position: absolute;
    right: 0;
    top: 1px;
    display: flex;
    flex-direction: column;
    align-items: center;
    width: 33px;
    height: 245px;
    padding: 12px 1px 0 0;
    border: 1px solid #ddd;
    border-radius: 2px;
    background: #fff;
}
.view-tools button {
    margin-bottom: 9px;
}
.view-tools svg {
    width: 20px;
    height: 20px;
    overflow: visible;
}
.view-tools .tri {
    margin: -1px 0 7px;
}
.view-tools hr {
    width: 20px;
    margin: -3px 0 6px;
    border: 0;
    border-top: 1px solid #666;
}
.two-d {
    fill: #1f7ae8;
    font-size: 8px;
    font-weight: bold;
}

/* rebar editor */
.edit {
    position: relative;
    flex: 1;
    min-height: 0;
}
.edit .panel-head {
    height: 28px;
}
.edit .grip {
    margin-right: 13px;
}
.edit-tools {
    display: flex;
    align-items: center;
    flex: none;
    height: 26px;
    padding-left: 6px;
}
.edit-tools svg {
    width: 15px;
    height: 15px;
}
.edit-tools .step {
    margin-right: 17px;
}
.edit-tools .step:nth-child(4) {
    margin-right: 15px;
}
.edit-tools .move {
    margin-right: 13px;
}
.cmd {
    display: flex;
    align-items: center;
    gap: 5px;
    margin-right: 12px;
    white-space: nowrap;
}
.cmd.other {
    margin-right: 11px;
}
.other .tri {
    border-top-color: #999;
}
.sheet-wrap {
    flex: 1;
    min-height: 0;
    overflow: hidden;
    margin: 0 0 12px;
    border-top: 1px solid #d9d9d9;
    background: linear-gradient(90deg, #f0f0f0 7px, transparent 7px);
}
.sheet {
    width: 1268px;
    border-collapse: collapse;
    table-layout: fixed;
    background: #fff;
}
.c0 { width: 7px; }
.c1 { width: 72px; }
.c2 { width: 56px; }
.c3 { width: 36px; }
.c4 { width: 33px; }
.c5 { width: 216px; }
.c6 { width: 166px; }
.c7 { width: 61px; }
.c8 { width: 38px; }
.c9 { width: 39px; }
.c10 { width: 49px; }
.c11 { width: 61px; }
.c13 { width: 71px; }
.c14 { width: 74px; }
.c16 { width: 157px; }
.sheet th, .sheet td {
    border: 1px solid #dcdcdc;
    border-left: 0;
    border-top: 0;
}
.sheet th {
    height: 20px;
    font-weight: normal;
    white-space: nowrap;
}
.sheet thead th.on, .sheet tbody th.on {
    background: #80b9fb;
    color: #fff;
}
.sheet tbody th {
    background: #f0f0f0;
    color: #666;
}
.two {
    height: 19px;
    white-space: normal;
    overflow: hidden;
    line-height: 15px;
    display: flex;
    align-items: center;
}
.row td {
    height: 46px;
    padding: 0 0 0 2px;
    background: #c1dfe0;
    color: #000;
    font: 10px/14px "DejaVu Sans Mono", "Noto Sans CJK SC", monospace;
}
.row .cn {
    font-size: 12px;
    font-family: "Liberation Mono", "Noto Sans CJK SC", monospace;
}
.row .current {
    border: 2px solid #808080;
    border-left: 0;
    border-top: 0;
    font: 12px/17px "Noto Sans", "Noto Sans CJK SC", sans-serif;
}
.row .shape {
    padding: 0;
}
.shape svg {
    width: 216px;
    height: 45px;
    font: 13px "Liberation Serif", serif;
}
.shape .big {
    font-size: 19px;
}
.row .grade {
    padding-left: 5px;
}
.hbar {
    position: absolute;
    left: 13px;
    right: 294px;
    bottom: 4px;
    height: 4px;
}

/* display settings */
.display {
    width: 265px;
    border-right: 0;
    border-color: #c3c6cc;
}
.display .grip {
    margin-right: 12px;
}
.display .panel-head {
    padding-right: 0;
}
.display .close {
    margin-right: -3px;
}
.sheet-tabs {
    display: flex;
    flex: none;
    align-items: flex-end;
    gap: 3px;
    height: 26px;
    padding: 0 2px;
    border-bottom: 1px solid #c3c6cc;
}
.sheet-tabs button {
    width: 62px;
    height: 22px;
    padding-top: 1px;
    border-radius: 3px 3px 0 0;
    background: #dedede;
}
.sheet-tabs .active {
    width: 60px;
    height: 24px;
    margin-bottom: -1px;
    border: 1px solid #c3c6cc;
    border-bottom: 0;
    background: #fff;
    color: #1f7ae8;
}
.scope {
    display: flex;
    flex: none;
    align-items: center;
    height: 29px;
    padding-left: 7px;
    gap: 22px;
    color: #000;
}
.display label {
    display: flex;
    align-items: center;
    white-space: nowrap;
}
.scope input {
    appearance: none;
    width: 14px;
    height: 14px;
    margin-right: 7px;
    border: 1px solid #888;
    border-radius: 50%;
}
.scope input:checked {
    background: radial-gradient(circle, #1f7ae8 3px, transparent 4px);
}
.floors {
    flex: 1;
    min-height: 0;
    padding-top: 3px;
    border: 1px solid #c3c6cc;
    border-right: 0;
}
.floors label {
    height: 24px;
    padding-left: 44px;
    color: #777;
}
.floors .root {
    padding-left: 9px;
}
.root .tri {
    margin-right: 7px;
    border-width: 4px 4px 0;
    border-top-color: #888;
}
.display input[type="checkbox"] {
    appearance: none;
    position: relative;
    width: 14px;
    height: 14px;
    margin-right: 7px;
    border: 1px solid #aaa;
    border-radius: 2px;
    background: #f0f0f0;
}
.floors input:checked::after {
    content: "";
    position: absolute;
    left: 4px;
    top: 0;
    width: 4px;
    height: 9px;
    border: solid #999;
    border-width: 0 2px 2px 0;
    transform: rotate(40deg);
}
.floors input.partial::after {
    content: "";
    position: absolute;
    inset: 1px;
    border: 1px solid #ccc;
}
.display .glow {
    flex: none;
    height: 38px;
}
.display .glow input[type="checkbox"] {
    margin: 0 3px 0 1px;
    border-color: #777;
    background: #fff;
}

/* status bar */
.status {
    display: flex;
    align-items: center;
    flex: none;
    height: 31px;
    background: #fcfcfc;
    white-space: nowrap;
}
.facts {
    display: flex;
    width: 445px;
}
.facts span {
    width: 110px;
}
.facts .f1 {
    width: 85px;
    text-indent: -3px;
}
.facts .f2 {
    width: 140px;
}
.snaps {
    display: flex;
    gap: 3px;
}
.snaps button {
    display: flex;
    align-items: center;
    justify-content: center;
    gap: 6px;
    width: 25px;
    height: 25px;
    border: 1px solid #888;
    border-radius: 3px;
}
.snaps .wide {
    width: 36px;
}
.snaps .off {
    margin: 0 3px;
    border-color: #aaa;
}
.snaps .active {
    border-color: #1f7ae8;
    background: #d5e6fb;
}
.snaps svg {
    width: 16px;
    height: 16px;
}
.snaps .tri {
    border-width: 4px 2px 0;
}
.hint {
    display: flex;
    align-items: center;
    gap: 4px;
    margin-left: 15px;
}
.hint svg {
    width: 16px;
    height: 16px;
}
.taskbar {
    display: flex;
    flex: none;
    height: 8px;
    overflow: hidden;
    background: #1c1d1b;
    color: #fff;
}
.taskbar .window {
    width: 288px;
    margin-left: 41px;
    background: radial-gradient(circle at 226px 8px, #d8c250 6px, transparent 7px), radial-gradient(circle at 242px 4px, #e0cc60 3px, transparent 4px), #f1f1f1;
}
.taskbar .item {
    width: 48px;
    margin-left: 247px;
    background: #484848;
}
.taskbar .clock {
    margin: 2px 58px 0 auto;
}
```
